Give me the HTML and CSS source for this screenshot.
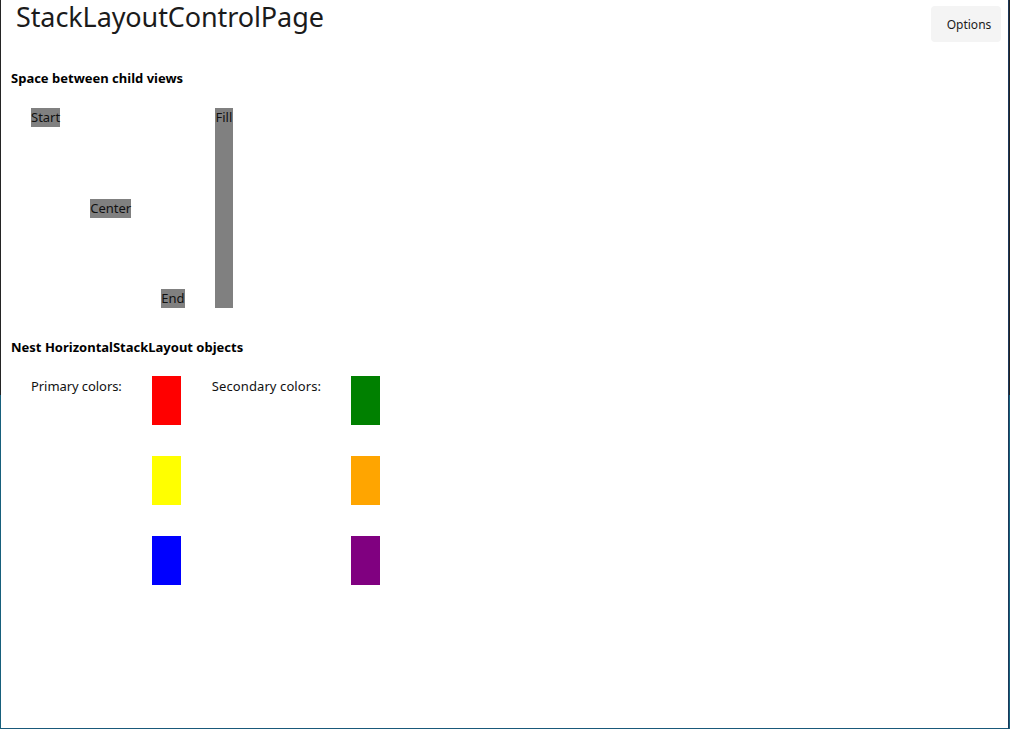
FILE: index.html
```html
<!DOCTYPE html>
<html>
<head>
<meta charset="utf-8">
<link rel="stylesheet" href="styles.css">
</head>
<body>
<div class="window">
  <header class="topbar">
    <h1 class="title">StackLayoutControlPage</h1>
    <button class="options">Options</button>
  </header>
  <main class="content">
    <h2 class="section-title first">Space between child views</h2>
    <div class="align-stack">
      <span class="chip start">Start</span>
      <span class="chip center">Center</span>
      <span class="chip end">End</span>
      <span class="chip fill">Fill</span>
    </div>
    <h2 class="section-title second">Nest HorizontalStackLayout objects</h2>
    <div class="nest-row">
      <span class="label primary">Primary colors:</span>
      <div class="swatches">
        <div class="swatch red"></div>
        <div class="swatch yellow"></div>
        <div class="swatch blue"></div>
      </div>
      <span class="label secondary">Secondary colors:</span>
      <div class="swatches">
        <div class="swatch green"></div>
        <div class="swatch orange"></div>
        <div class="swatch purple"></div>
      </div>
    </div>
  </main>
</div>
</body>
</html>
```

FILE: styles.css
```css
html, body {
  margin: 0;
  padding: 0;
}
body {
  width: 1010px;
  height: 729px;
  overflow: hidden;
  background: linear-gradient(to bottom, #242424 0, #242424 395px, #17607c 395px, #17607c 100%);
  font-family: "Noto Sans", "Open Sans", sans-serif;
  color: #000;
}
.window {
  margin-left: 1px;
  width: 1007px;
  height: 728px;
  background: #fff;
  border-right: 1px solid #1c3759;
  border-bottom: 1px solid #19597a;
  display: flex;
  flex-direction: column;
}
.topbar {
  display: flex;
  justify-content: space-between;
  align-items: flex-start;
  height: 60px;
}
.title {
  margin: 0 0 0 15px;
  font-size: 27px;
  font-weight: 400;
  line-height: 34px;
  letter-spacing: -0.1px;
  color: #1b1b1b;
}
.options {
  margin: 6px 7px 0 0;
  width: 70px;
  height: 36px;
  border: none;
  border-radius: 4px;
  background: #f4f4f4;
  font-family: inherit;
  font-size: 12px;
  color: #1b1b1b;
  padding: 0 0 0 6px;
}
.content {
  padding-left: 10px;
}
.section-title {
  margin: 0;
  font-size: 13px;
  font-weight: 700;
  line-height: 19px;
}
.section-title.first {
  margin-top: 9px;
}
.align-stack {
  margin: 20px 0 0 20px;
  height: 200px;
  display: flex;
  gap: 30px;
}
.chip {
  background: #808080;
  color: #111;
  font-size: 13px;
  line-height: 19px;
  height: 19px;
}
.chip.start { align-self: flex-start; }
.chip.center { align-self: center; }
.chip.end { align-self: flex-end; padding-right: 1px; }
.chip.fill { align-self: stretch; height: auto; padding-right: 1px; }
.section-title.second {
  margin-top: 30px;
}
.nest-row {
  margin: 19px 0 0 20px;
  display: flex;
  gap: 30px;
  align-items: flex-start;
}
.label {
  font-size: 13px;
  line-height: 19px;
  padding-top: 1px;
  color: #111;
}
.label.primary {
  letter-spacing: -0.07px;
}
.label.secondary {
  margin-left: 1px;
  letter-spacing: 0.1px;
}
.swatches {
  display: flex;
  flex-direction: column;
  gap: 31px;
}
.swatch {
  width: 29px;
  height: 49px;
}
.red { background: #ff0000; }
.yellow { background: #ffff00; }
.blue { background: #0000ff; }
.green { background: #008000; }
.orange { background: #ffa500; }
.purple { background: #800080; }
```
